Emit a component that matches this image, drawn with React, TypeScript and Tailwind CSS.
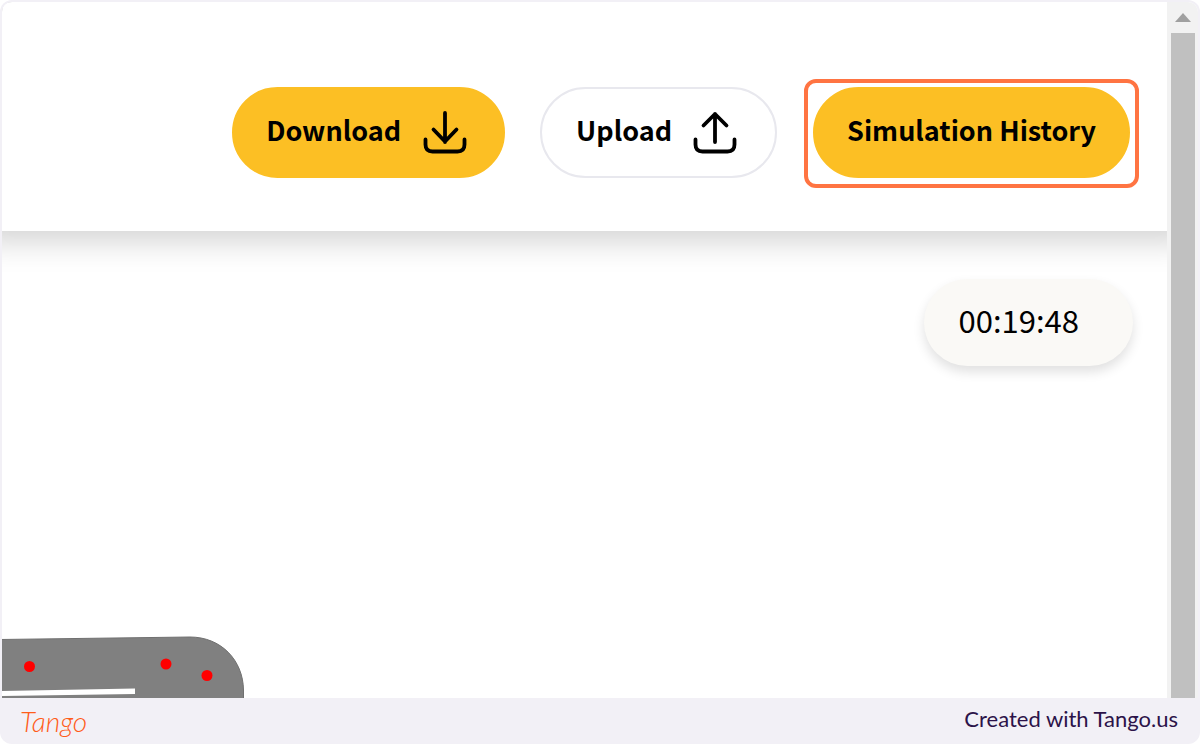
import type { ReactNode } from "react";

type PillProps = {
  children: ReactNode;
  className: string;
};

function Pill({ children, className }: PillProps) {
  return (
    <button
      type="button"
      className={`flex h-[91px] shrink-0 items-center rounded-full border-2 text-[27px] leading-9 font-bold text-black ${className}`}
    >
      {children}
    </button>
  );
}

function TrayIcon({ arrow }: { arrow: string }) {
  return (
    <svg
      width="44"
      height="44"
      viewBox="0 0 44 44"
      fill="none"
      stroke="black"
      strokeWidth="3.8"
      strokeLinejoin="round"
      strokeLinecap="round"
      aria-hidden="true"
    >
      <path d="M2.500 28.500v5q0 7 7 7h25q7 0 7-7V28.500" />
      <path d={arrow} />
    </svg>
  );
}

function Header() {
  return (
    <header className="relative flex h-[229px] items-start justify-end bg-white pt-[77px] pr-7 shadow-[0_-14px_30px_24px_rgba(0,0,0,0.18)]">
      <div className="flex items-center gap-[35px] pt-2 pr-[27px]">
        <Pill className="gap-[22px] border-[#fcbf24] bg-[#fcbf24] pr-9 pl-8">
          <span className="pb-1.5">Download</span>
          <TrayIcon arrow="M22 2v29M10.500 18.500l11.500 12 11.500-12" />
        </Pill>
        <Pill className="gap-[21px] border-[#e8e8ee] bg-white pr-[38px] pl-[34px]">
          <span className="pb-1.5">Upload</span>
          <TrayIcon arrow="M22 31V3M10.500 14.500L22 3l11.500 11.500" />
        </Pill>
      </div>
      <div className="rounded-xl border-4 border-[#ff7442] px-[5px] pt-1 pb-1.5">
        <Pill className="border-[#fcbf24] bg-[#fcbf24] px-8">
          <span className="pb-1.5">Simulation History</span>
        </Pill>
      </div>
    </header>
  );
}

function Track() {
  return (
    <svg
      className="block"
      width="243"
      height="62"
      viewBox="0 0 243 62"
      role="img"
      aria-label="Track"
    >
      <path d="M-2 3.500L188 1C219 1 241 24 241.500 54V64H-2Z" fill="#808080" stroke="#707070" strokeWidth="1" />
      <path d="M0 55L133 52.500V58L0 60Z" fill="white" />
      <circle cx="27.500" cy="30.500" r="5.500" fill="red" />
      <circle cx="164" cy="28" r="5.500" fill="red" />
      <circle cx="205" cy="39.500" r="5.500" fill="red" />
    </svg>
  );
}

function Scrollbar() {
  return (
    <div className="flex w-[31px] shrink-0 flex-col items-center bg-[#f2f2f2] pr-[3px] pl-1">
      <div className="flex h-[31px] items-center">
        <svg width="16" height="9" viewBox="0 0 16 9" aria-hidden="true">
          <path d="M8 0l8 9H0z" fill="#a0a0a0" />
        </svg>
      </div>
      <div className="w-full flex-1 bg-[#c0c0c0]" />
    </div>
  );
}

export default function App() {
  return (
    <div className="flex min-h-screen flex-col overflow-hidden rounded-xl bg-[#f2f0f6] font-['Noto_Sans_CJK_SC','Noto_Sans',sans-serif]">
      <div className="mx-[2px] mt-[2px] flex flex-1 overflow-hidden rounded-t-[10px] bg-white">
        <main className="flex min-w-0 flex-1 flex-col overflow-hidden">
          <Header />
          <section className="flex flex-1 flex-col items-start justify-between">
            <div className="relative mt-12 mr-[34px] flex h-[87px] items-center self-end rounded-full bg-[#faf9f6] pr-[54px] pl-[35px] shadow-[0_6px_12px_rgba(0,0,0,0.12)]">
              <time className="pb-1.5 text-[31px] leading-10 text-black">00:19:48</time>
            </div>
            <Track />
          </section>
        </main>
        <Scrollbar />
      </div>
      <footer className="flex h-[46px] items-center justify-between pr-[22px] pl-5 font-['Lato',sans-serif]">
        <a href="#tango" className="text-[28px] leading-8 font-light text-[#ff5c1a] italic">
          Tango
        </a>
        <span className="pb-1 text-[22px] leading-7 text-[#2c1349]">Created with Tango.us</span>
      </footer>
    </div>
  );
}
